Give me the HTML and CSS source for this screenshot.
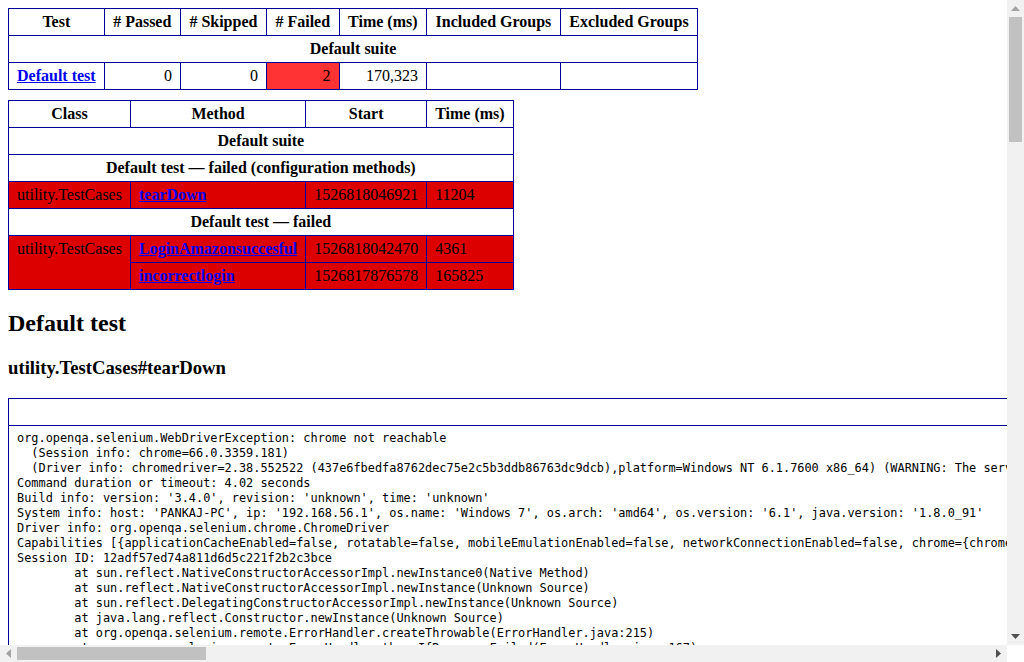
FILE: index.html
```html
<!DOCTYPE html>
<html>
<head>
<meta charset="utf-8">
<title>TestNG Report</title>
<link rel="stylesheet" href="styles.css">
</head>
<body>
<table id="summary">
<thead><tr><th>Test</th><th># Passed</th><th># Skipped</th><th># Failed</th><th>Time (ms)</th><th>Included Groups</th><th>Excluded Groups</th></tr></thead>
<tbody><tr><th colspan="7">Default suite</th></tr></tbody>
<tbody><tr><td><a href="#t0">Default test</a></td><td class="num">0</td><td class="num">0</td><td class="num attn">2</td><td class="num">170,323</td><td></td><td></td></tr></tbody>
</table>
<table>
<thead><tr><th>Class</th><th>Method</th><th>Start</th><th>Time (ms)</th></tr></thead>
<tbody><tr><th colspan="4">Default suite</th></tr></tbody>
<tbody><tr><th colspan="4">Default test — failed (configuration methods)</th></tr>
<tr class="failedeven"><td>utility.TestCases</td><td><a href="#m0">tearDown</a></td><td>1526818046921</td><td>11204</td></tr></tbody>
<tbody><tr><th colspan="4">Default test — failed</th></tr>
<tr class="failedeven"><td rowspan="2">utility.TestCases</td><td><a href="#m1">LoginAmazonsuccesful</a></td><td>1526818042470</td><td>4361</td></tr>
<tr class="failedeven"><td><a href="#m2">incorrectlogin</a></td><td>1526817876578</td><td>165825</td></tr></tbody>
</table>
<h2>Default test</h2>
<h3 id="m0">utility.TestCases#tearDown</h3>
<table class="result">
<tr><th>&nbsp;</th></tr>
<tr><td><div class="stacktrace">org.openqa.selenium.WebDriverException: chrome not reachable
  (Session info: chrome=66.0.3359.181)
  (Driver info: chromedriver=2.38.552522 (437e6fbedfa8762dec75e2c5b3ddb86763dc9dcb),platform=Windows NT 6.1.7600 x86_64) (WARNING: The server did not provide any stacktrace information)
Command duration or timeout: 4.02 seconds
Build info: version: '3.4.0', revision: 'unknown', time: 'unknown'
System info: host: 'PANKAJ-PC', ip: '192.168.56.1', os.name: 'Windows 7', os.arch: 'amd64', os.version: '6.1', java.version: '1.8.0_91'
Driver info: org.openqa.selenium.chrome.ChromeDriver
Capabilities [{applicationCacheEnabled=false, rotatable=false, mobileEmulationEnabled=false, networkConnectionEnabled=false, chrome={chromedriverVersion=2.38.552522 (437e6fbedfa8762dec75e2c5b3ddb86763dc9dcb), userDataDir=C:\Users\PANKAJ~1\AppData\Local\Temp\scoped_dir5816_21593}, takesHeapSnapshot=true, pageLoadStrategy=normal, databaseEnabled=false, handlesAlerts=true, hasTouchScreen=false, version=66.0.3359.181, platform=XP, browserConnectionEnabled=false, nativeEvents=true, acceptSslCerts=false, acceptInsecureCerts=false, locationContextEnabled=true, webStorageEnabled=true, browserName=chrome, takesScreenshot=true, javascriptEnabled=true, cssSelectorsEnabled=true, setWindowRect=true, unexpectedAlertBehaviour=}]
Session ID: 12adf57ed74a811d6d5c221f2b2c3bce
	at sun.reflect.NativeConstructorAccessorImpl.newInstance0(Native Method)
	at sun.reflect.NativeConstructorAccessorImpl.newInstance(Unknown Source)
	at sun.reflect.DelegatingConstructorAccessorImpl.newInstance(Unknown Source)
	at java.lang.reflect.Constructor.newInstance(Unknown Source)
	at org.openqa.selenium.remote.ErrorHandler.createThrowable(ErrorHandler.java:215)
	at org.openqa.selenium.remote.ErrorHandler.throwIfResponseFailed(ErrorHandler.java:167)
	at org.openqa.selenium.remote.RemoteWebDriver.execute(RemoteWebDriver.java:671)
	at org.openqa.selenium.remote.RemoteWebDriver.quit(RemoteWebDriver.java:497)
	at org.openqa.selenium.chrome.ChromeDriver.quit(ChromeDriver.java:209)
	at utility.TestCases.tearDown(TestCases.java:96)
	at sun.reflect.NativeMethodAccessorImpl.invoke0(Native Method)
	at sun.reflect.NativeMethodAccessorImpl.invoke(Unknown Source)
	at sun.reflect.DelegatingMethodAccessorImpl.invoke(Unknown Source)
	at java.lang.reflect.Method.invoke(Unknown Source)
	at org.testng.internal.MethodInvocationHelper.invokeMethod(MethodInvocationHelper.java:108)
	at org.testng.internal.Invoker.invokeConfigurationMethod(Invoker.java:523)
	at org.testng.internal.Invoker.invokeConfigurations(Invoker.java:224)
	at org.testng.internal.Invoker.invokeConfigurations(Invoker.java:146)
	at org.testng.TestRunner.afterRun(TestRunner.java:1052)
	at org.testng.TestRunner.run(TestRunner.java:656)
	at org.testng.SuiteRunner.runTest(SuiteRunner.java:364)
	at org.testng.SuiteRunner.runSequentially(SuiteRunner.java:359)
	at org.testng.SuiteRunner.privateRun(SuiteRunner.java:312)
	at org.testng.SuiteRunner.run(SuiteRunner.java:261)
	at org.testng.SuiteRunnerWorker.runSuite(SuiteRunnerWorker.java:52)
	at org.testng.SuiteRunnerWorker.run(SuiteRunnerWorker.java:86)
	at org.testng.TestNG.runSuitesSequentially(TestNG.java:1215)
	at org.testng.TestNG.runSuitesLocally(TestNG.java:1140)
	at org.testng.TestNG.runSuites(TestNG.java:1069)
	at org.testng.TestNG.run(TestNG.java:1037)
	at org.testng.remote.AbstractRemoteTestNG.run(AbstractRemoteTestNG.java:114)
	at org.testng.remote.RemoteTestNG.initAndRun(RemoteTestNG.java:251)
	at org.testng.remote.RemoteTestNG.main(RemoteTestNG.java:77)
</div></td></tr>
</table>
<p class="totop"><a href="#summary">back to summary</a></p>
<h3 id="m1">utility.TestCases#LoginAmazonsuccesful</h3>
<table class="result">
<tr><th>&nbsp;</th></tr>
<tr><td><div class="stacktrace">org.openqa.selenium.NoSuchElementException: no such element: Unable to locate element: {"method":"id","selector":"ap_email"}
  (Session info: chrome=66.0.3359.181)
	at org.openqa.selenium.remote.RemoteWebDriver.findElement(RemoteWebDriver.java:413)
	at utility.TestCases.LoginAmazonsuccesful(TestCases.java:54)
	at org.testng.TestNG.run(TestNG.java:1037)
</div></td></tr>
</table>
<p class="totop"><a href="#summary">back to summary</a></p>

<div class="vscroll">
  <svg class="arrow a-up" width="9" height="5" viewBox="0 0 9 5"><polygon points="0,5 9,5 4.5,0" fill="#a3a3a3"/></svg>
  <div class="vthumb"></div>
  <svg class="arrow a-down" width="9" height="5" viewBox="0 0 9 5"><polygon points="0,0 9,0 4.5,5" fill="#505050"/></svg>
</div>
<div class="hscroll">
  <svg class="arrow a-left" width="5" height="9" viewBox="0 0 5 9"><polygon points="5,0 5,9 0,4.5" fill="#a3a3a3"/></svg>
  <div class="hthumb"></div>
  <svg class="arrow a-right" width="5" height="9" viewBox="0 0 5 9"><polygon points="0,0 0,9 5,4.5" fill="#505050"/></svg>
</div>
<div class="corner"></div>
</body>
</html>
```
FILE: styles.css
```css
html {
  overflow: hidden;
}
body {
  margin: 8px;
  font-family: "Liberation Serif", "Times New Roman", serif;
  font-size: 16px;
  color: #000;
  background: #fff;
}
table {
  margin-bottom: 10px;
  border-collapse: collapse;
  empty-cells: show;
}
th, td {
  border: 1px solid #009;
  padding: .25em .5em;
}
th {
  vertical-align: bottom;
}
td {
  vertical-align: top;
}
#summary th {
  padding: .25em 8.5px;
}
table a {
  font-weight: bold;
}
a {
  color: #00e;
}
.num {
  text-align: right;
}
.attn {
  background-color: #f33;
}
.failedeven td {
  background-color: #d00;
}
.stacktrace {
  white-space: pre;
  font-family: "DejaVu Sans Mono", monospace;
  font-size: 11.9px;
  line-height: 15px;
  tab-size: 8;
  padding-top: 1px;
}
.totop {
  font-size: 85%;
  text-align: center;
  border-bottom: 2px solid #000;
}
.vscroll {
  position: fixed;
  top: 0;
  right: 0;
  width: 17px;
  height: 645px;
  background: #f1f1f1;
}
.hscroll {
  position: fixed;
  left: 0;
  bottom: 0;
  width: 1007px;
  height: 17px;
  background: #f1f1f1;
}
.corner {
  position: fixed;
  right: 0;
  bottom: 0;
  width: 17px;
  height: 17px;
  background: #fff;
}
.vthumb {
  position: absolute;
  left: 2px;
  top: 17px;
  width: 13px;
  height: 125px;
  background: #c1c1c1;
}
.hthumb {
  position: absolute;
  left: 17px;
  top: 2px;
  width: 189px;
  height: 13px;
  background: #c1c1c1;
}
.arrow {
  position: absolute;
  display: block;
}
.a-up { left: 4px; top: 6px; }
.a-down { left: 4px; bottom: 6px; }
.a-left { left: 6px; top: 4px; }
.a-right { right: 6px; top: 4px; }
```
